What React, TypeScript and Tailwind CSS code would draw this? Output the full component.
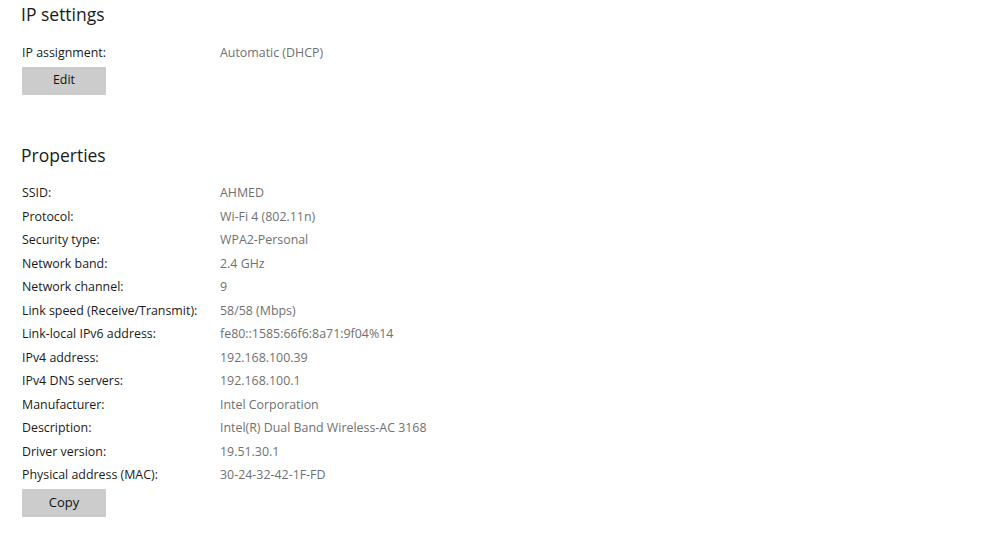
const props: [string, string][] = [
  ["SSID:", "AHMED"],
  ["Protocol:", "Wi-Fi 4 (802.11n)"],
  ["Security type:", "WPA2-Personal"],
  ["Network band:", "2.4 GHz"],
  ["Network channel:", "9"],
  ["Link speed (Receive/Transmit):", "58/58 (Mbps)"],
  ["Link-local IPv6 address:", "fe80::1585:66f6:8a71:9f04%14"],
  ["IPv4 address:", "192.168.100.39"],
  ["IPv4 DNS servers:", "192.168.100.1"],
  ["Manufacturer:", "Intel Corporation"],
  ["Description:", "Intel(R) Dual Band Wireless-AC 3168"],
  ["Driver version:", "19.51.30.1"],
  ["Physical address (MAC):", "30-24-32-42-1F-FD"],
];

function Row({ label, value }: { label: string; value: string }) {
  return (
    <div className="flex h-[23.5px] items-center text-[12.4px]">
      <div className="w-[198px] text-[#1a1a1a]">{label}</div>
      <div className="text-[#707070]">{value}</div>
    </div>
  );
}

export default function App() {
  return (
    <div className="w-[982px] h-[534px] bg-white pl-[22px] pt-[1px] font-['Open_Sans',sans-serif] overflow-hidden">
      <h2 className="text-[17.5px] h-[26px] leading-[26px] text-[#1a1a1a] -ml-[1px]">IP settings</h2>
      <div className="mt-[14.5px]">
        <Row label="IP assignment:" value="Automatic (DHCP)" />
      </div>
      <button className="mt-[1.5px] w-[84px] h-[28px] bg-[#cccccc] text-[12.4px] text-[#111]">Edit</button>
      <h2 className="mt-[47px] text-[17.5px] h-[26px] leading-[26px] text-[#1a1a1a] -ml-[1px]">Properties</h2>
      <div className="mt-[14.5px]">
        {props.map(([l, v]) => (
          <Row key={l} label={l} value={v} />
        ))}
      </div>
      <button className="mt-[1px] w-[84px] h-[28px] bg-[#cccccc] text-[13px] text-[#111]">Copy</button>
    </div>
  );
}
